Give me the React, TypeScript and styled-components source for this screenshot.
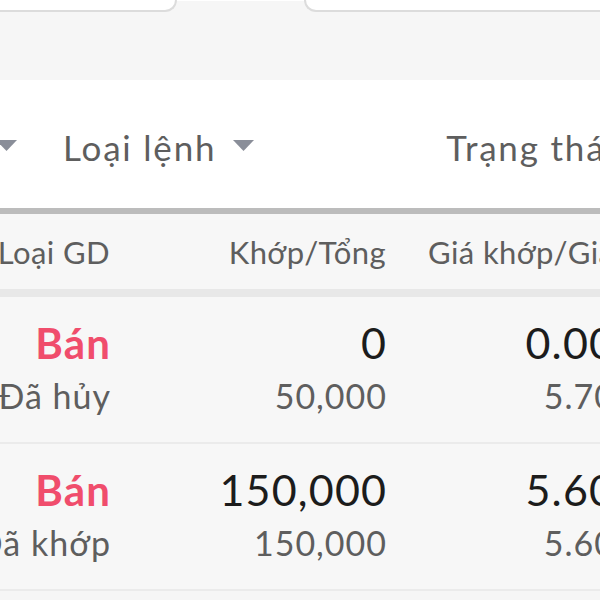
import React from 'react';
import styled, { createGlobalStyle } from 'styled-components';

const GlobalStyle = createGlobalStyle`
  html, body {
    margin: 0;
    padding: 0;
    background-color: #f6f6f6;
    font-family: Lato, "Noto Sans", sans-serif;
    overflow: hidden;
  }
`;

const Page = styled.div`
  width: 600px;
  height: 600px;
  overflow: hidden;
  background-color: #f6f6f6;
`;

const TabStrip = styled.div`
  display: flex;
  height: 12px;
`;

const Tab = styled.div<{ side: 'left' | 'right' }>`
  background-color: #ffffff;
  border-bottom: 2px solid #dcdcdc;
  box-sizing: border-box;
  height: 12px;
  ${props => props.side === 'left'
    ? 'width: 177px; border-right: 2px solid #dcdcdc; border-bottom-right-radius: 22px;'
    : 'flex: 1; border-left: 2px solid #dcdcdc; border-bottom-left-radius: 22px;'}
`;

const TabGap = styled.div`
  width: 127px;
  border-top: 1px solid #ffffff;
`;

const Spacer = styled.div`
  height: 68px;
`;

const FilterBar = styled.div`
  display: flex;
  align-items: center;
  height: 134px;
  box-sizing: border-box;
  padding-top: 6px;
  background-color: #ffffff;
  border-bottom: 6px solid #bcbcbc;
  white-space: nowrap;
  overflow: hidden;
`;

const Filter = styled.div<{ offset: number }>`
  display: flex;
  align-items: center;
  gap: 17px;
  margin-left: ${props => props.offset}px;
  flex-shrink: 0;
  font-size: 35px;
  color: #5e5e5e;
  letter-spacing: 1.8px;
`;

const Caret = styled.svg`
  width: 21px;
  height: 11px;
  flex-shrink: 0;
  margin-top: -4px;
`;

const Table = styled.div`
  width: 614px;
`;

const HeaderRow = styled.div`
  display: grid;
  grid-template-columns: 110px 276px 228px;
  height: 75px;
  align-items: center;
  background-color: #f7f7f7;
  border-bottom: 8px solid #e8e8e8;
  font-size: 31px;
  color: #5e5e5e;
`;

const HeadCell = styled.div<{ align: 'start' | 'end'; pad?: number }>`
  display: flex;
  justify-content: ${props => (props.align === 'end' ? 'flex-end' : 'flex-start')};
  padding-left: ${props => props.pad || 0}px;
  white-space: nowrap;
  letter-spacing: 0.4px;
`;

const Row = styled.div`
  display: grid;
  grid-template-columns: 110px 276px 228px;
  padding: 20px 0 19px;
  background-color: #f7f7f7;
  border-bottom: 2px solid #ebebeb;
`;

const Cell = styled.div`
  display: flex;
  flex-direction: column;
  align-items: flex-end;
  white-space: nowrap;
`;

const Main = styled.span<{ tone?: 'sell' }>`
  font-size: ${props => (props.tone === 'sell' ? 42 : 43)}px;
  line-height: 52px;
  letter-spacing: 1.2px;
  margin-right: -1.2px;
  font-weight: ${props => (props.tone === 'sell' ? 700 : 400)};
  color: ${props => (props.tone === 'sell' ? '#f04d6c' : '#1c1c1c')};
`;

const Sub = styled.span`
  font-size: 34px;
  line-height: 54px;
  letter-spacing: 1px;
  margin-right: -1px;
  color: #5e5e5e;
`;

const orders = [
  { side: 'Bán', status: 'Đã hủy', matched: '0', total: '50,000', price: '0.00', order: '5.70' },
  { side: 'Bán', status: 'Đã khớp', matched: '150,000', total: '150,000', price: '5.60', order: '5.60' },
];

function CaretIcon() {
  return (
    <Caret viewBox="0 0 21 11">
      <path d="M0 0H21L10.5 11Z" fill="#8a8e99" />
    </Caret>
  );
}

export default function App() {
  return (
    <Page>
      <GlobalStyle />
      <TabStrip>
        <Tab side="left" />
        <TabGap />
        <Tab side="right" />
      </TabStrip>
      <Spacer />
      <FilterBar>
        <Filter offset={-4}>
          <CaretIcon />
        </Filter>
        <Filter offset={46}>
          <span>Loại lệnh</span>
          <CaretIcon />
        </Filter>
        <Filter offset={192}>
          <span>Trạng thái</span>
          <CaretIcon />
        </Filter>
      </FilterBar>
      <Table>
        <HeaderRow>
          <HeadCell align="end">Loại GD</HeadCell>
          <HeadCell align="end">Khớp/Tổng</HeadCell>
          <HeadCell align="start" pad={42}>Giá khớp/Giá đặt</HeadCell>
        </HeaderRow>
        {orders.map((o, i) => (
          <Row key={i}>
            <Cell>
              <Main tone="sell">{o.side}</Main>
              <Sub>{o.status}</Sub>
            </Cell>
            <Cell>
              <Main>{o.matched}</Main>
              <Sub>{o.total}</Sub>
            </Cell>
            <Cell>
              <Main>{o.price}</Main>
              <Sub>{o.order}</Sub>
            </Cell>
          </Row>
        ))}
      </Table>
    </Page>
  );
}
